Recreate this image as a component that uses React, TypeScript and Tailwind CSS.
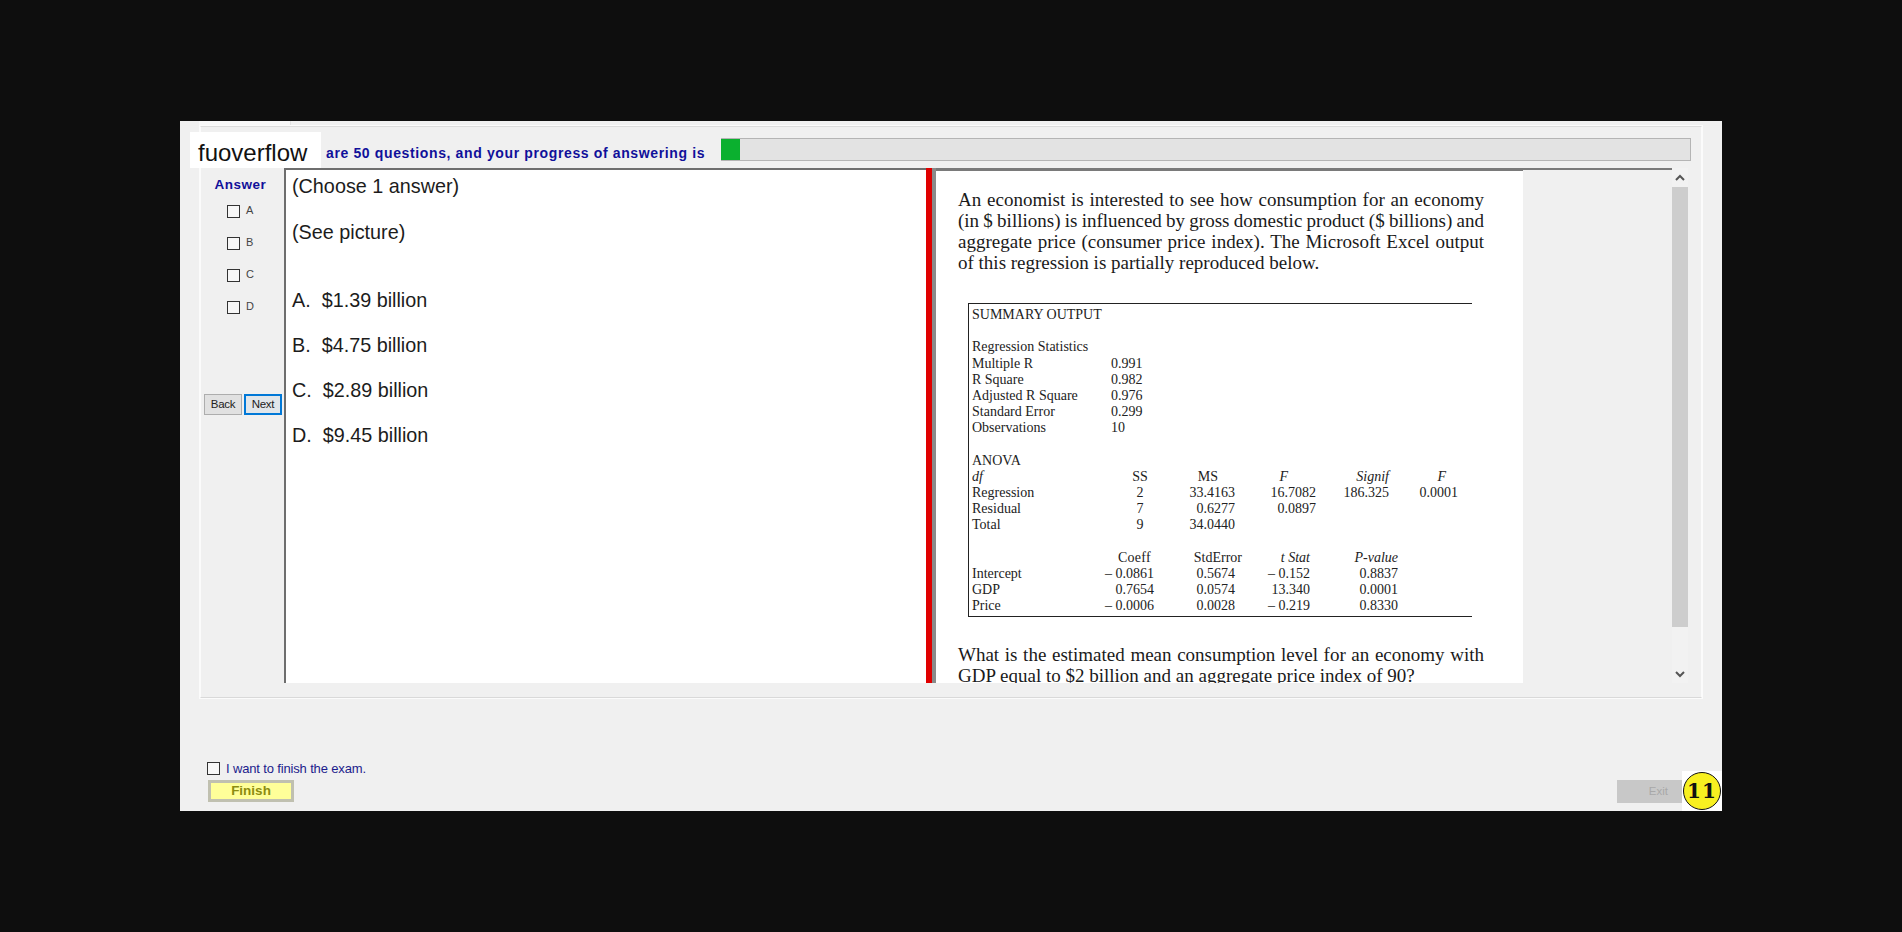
const options = ["A", "B", "C", "D"];

const answers = ["A.  $1.39 billion", "B.  $4.75 billion", "C.  $2.89 billion", "D.  $9.45 billion"];

const stats = [
  ["Multiple R", "0.991"],
  ["R Square", "0.982"],
  ["Adjusted R Square", "0.976"],
  ["Standard Error", "0.299"],
  ["Observations", "10"],
];

const anovaRows = [
  ["Regression", "2", "33.4163", "16.7082", "186.325", "0.0001"],
  ["Residual", "7", "0.6277", "0.0897", "", ""],
  ["Total", "9", "34.0440", "", "", ""],
];

const coeffRows = [
  ["Intercept", "– 0.0861", "0.5674", "– 0.152", "0.8837"],
  ["GDP", "0.7654", "0.0574", "13.340", "0.0001"],
  ["Price", "– 0.0006", "0.0028", "– 0.219", "0.8330"],
];

function AnovaRow({ cells, italic }: { cells: string[]; italic?: boolean }) {
  return (
    <div className="grid grid-cols-[153px_30px_80px_81px_73px_69px] h-[16.2px]">
      <span className={italic ? "italic" : ""}>{cells[0]}</span>
      <span className="text-center">{cells[1]}</span>
      <span className={italic ? "text-right pr-[17px]" : "text-right"}>{cells[2]}</span>
      <span className={italic ? "text-right italic pr-7" : "text-right"}>{cells[3]}</span>
      <span className={italic ? "text-right italic" : "text-right"}>{cells[4]}</span>
      <span className={italic ? "text-right italic pr-3" : "text-right"}>{cells[5]}</span>
    </div>
  );
}

function CoeffRow({ cells, head }: { cells: string[]; head?: boolean }) {
  return (
    <div className="grid grid-cols-[102px_80px_81px_75px_88px] h-[16.2px]">
      <span>{cells[0]}</span>
      <span className={head ? "text-right pr-[3px] tracking-[0.3px]" : "text-right"}>{cells[1]}</span>
      <span className={head ? "text-right -mr-[7px]" : "text-right"}>{cells[2]}</span>
      <span className={head ? "text-right italic" : "text-right"}>{cells[3]}</span>
      <span className={head ? "text-right italic" : "text-right"}>{cells[4]}</span>
    </div>
  );
}

function Excel() {
  return (
    <div className="ml-[10px] mt-[30px] w-[504px] h-[314px] border-l border-t border-b border-[#222] pl-[3px] pt-[3px] font-['Liberation_Serif',serif] text-[14px] leading-[16.2px] text-[#222]">
      <div className="h-[16.2px]">SUMMARY OUTPUT</div>
      <div className="h-[16.2px]" />
      <div className="h-[16.2px]">Regression Statistics</div>
      {stats.map((s) => (
        <div key={s[0]} className="grid grid-cols-[139px_60px] h-[16.2px]">
          <span>{s[0]}</span>
          <span>{s[1]}</span>
        </div>
      ))}
      <div className="h-[16.2px]" />
      <div className="h-[16.2px]">ANOVA</div>
      <AnovaRow italic cells={["df", "SS", "MS", "F", "Signif", "F"]} />
      {anovaRows.map((r) => (
        <AnovaRow key={r[0]} cells={r} />
      ))}
      <div className="h-[16.2px]" />
      <CoeffRow head cells={["", "Coeff", "StdError", "t Stat", "P-value"]} />
      {coeffRows.map((r) => (
        <CoeffRow key={r[0]} cells={r} />
      ))}
    </div>
  );
}

export default function App() {
  return (
    <div className="min-h-[932px] bg-[#0e0e0e] pt-[121px] pl-[180px] font-['Liberation_Sans',sans-serif]">
      <div className="relative w-[1542px] h-[690px] bg-[#f0f0f0] flex flex-col">
        {/* tab left over from the cropped window */}
        <div className="ml-[19px] w-[92px] h-[5px] bg-[#f8f8f8] border-r border-[#e2e2e2]" />

        <div className="mx-[20px] h-[572px] border border-t-[#dcdcdc] border-x-[#fbfbfb] border-b-[#d9d9d9] shadow-[0_0_0_1px_#fbfbfb] flex flex-col">
          <div className="h-[41px] flex items-start pl-[125px] pr-[10px] pt-[11px]">
            <span className="w-[395px] mt-[4px] whitespace-nowrap font-bold text-[14px] leading-[22px] text-[#10109a] tracking-[0.63px]">
              are 50 questions, and your progress of answering is
            </span>
            <div className="flex-1 h-[23px] bg-[#e3e3e3] border-y border-r border-[#b4b4b4]">
              <div className="w-[19px] h-full bg-[#0bb02f]" />
            </div>
          </div>

          <div className="h-[515px] flex">
            <div className="w-[83px] flex flex-col">
              <div className="pt-[9px] pr-[4px] text-center font-bold text-[13.5px] leading-[15px] text-[#10109a] tracking-[0.5px]">
                Answer
              </div>
              <div className="mt-[13px] pl-[26px] flex flex-col gap-[19px]">
                {options.map((o) => (
                  <div key={o} className="flex items-start gap-[6px] h-[13px]">
                    <div className="w-[13px] h-[13px] border border-[#333] bg-[#f7f7f7]" />
                    <span className="text-[11px] leading-[11px] text-[#444]">{o}</span>
                  </div>
                ))}
              </div>
              <div className="mt-[80px] pl-[3px] flex gap-[2px]">
                <button className="w-[38px] h-[21px] bg-[#e1e1e1] border border-[#adadad] text-[11.5px] text-[#222] tracking-[-0.3px]">Back</button>
                <button className="w-[38px] h-[21px] bg-[#e1e6ea] border-2 border-[#0078d7] text-[11.5px] text-[#222] tracking-[-0.3px]">Next</button>
              </div>
            </div>

            <div className="w-[642px] bg-white border-l-2 border-t-2 border-[#6e6e6e] pl-[6px] pt-[2px] text-[19.8px] leading-[28px] text-[#1c1c1c]">
              <p>(Choose 1 answer)</p>
              <p className="mt-[18px]">(See picture)</p>
              <div className="mt-[40px] flex flex-col gap-[17px]">
                {answers.map((a) => (
                  <p key={a} className="whitespace-pre">{a}</p>
                ))}
              </div>
            </div>

            <div className="w-[6px] bg-[#e00000]" />
            <div className="w-[4px] bg-[#8a8a8a]" />

            <div className="flex-1 flex min-h-0">
              <div className="w-[587px] bg-white border-t-[3px] border-[#7a7a7a] pl-[22px] overflow-hidden">
                <div className="mt-[18px] w-[526px] font-['Liberation_Serif',serif] text-[19px] leading-[21px] text-[#1a1a1a]">
                  <p className="whitespace-nowrap [text-align-last:justify]">An economist is interested to see how consumption for an economy</p>
                  <p className="whitespace-nowrap [text-align-last:justify] [word-spacing:-0.6px]">(in $ billions) is influenced by gross domestic product ($ billions) and</p>
                  <p className="whitespace-nowrap [text-align-last:justify]">aggregate price (consumer price index). The Microsoft Excel output</p>
                  <p>of this regression is partially reproduced below.</p>
                </div>
                <Excel />
                <div className="mt-[27px] w-[526px] font-['Liberation_Serif',serif] text-[19px] leading-[21px] text-[#1a1a1a]">
                  <p className="whitespace-nowrap [text-align-last:justify]">What is the estimated mean consumption level for an economy with</p>
                  <p>GDP equal to $2 billion and an aggregate price index of 90?</p>
                </div>
              </div>
              <div className="w-[149px] border-t-2 border-[#7a7a7a]" />
              <div className="w-[16px] bg-[#f2f2f2] flex flex-col items-center text-[#555]">
                <svg className="mt-[6px] shrink-0" width="10" height="8" viewBox="0 0 10 8" fill="none" stroke="currentColor" strokeWidth="2"><path d="M1 6l4-4 4 4" /></svg>
                <div className="mt-[5px] w-full flex-1 bg-[#cdcdcd]" />
                <div className="h-[56px] w-full flex items-end justify-center pb-[5px]">
                  <svg width="10" height="8" viewBox="0 0 10 8" fill="none" stroke="currentColor" strokeWidth="2"><path d="M1 2l4 4 4-4" /></svg>
                </div>
              </div>
            </div>
          </div>
        </div>

        <div className="pl-[27px] mt-[63px] flex flex-col">
          <div className="flex items-center gap-[6px] h-[14px]">
            <div className="w-[13px] h-[13px] border border-[#333] bg-[#f7f7f7]" />
            <span className="mt-[2px] text-[13px] leading-[14px] tracking-[-0.15px] text-[#1c1c8c]">I want to finish the exam.</span>
          </div>
          <div className="flex justify-between mt-[5px]">
            <button className="ml-px w-[86px] h-[22px] bg-[#ffff99] border-[3px] border-[#c0c0b0] font-bold text-[13.5px] leading-[16px] text-[#8c8c10]">Finish</button>
            <button className="mr-[40px] w-[65px] h-[23px] bg-[#c8c8c8] text-[11.5px] text-[#a8a8a8] text-right pr-[14px]">Exit</button>
          </div>
        </div>

        {/* countdown badge */}
        <div className="absolute right-0 bottom-0 w-[40px] h-[40px] bg-white flex items-center justify-center">
          <div className="w-[38px] h-[38px] rounded-full bg-[#f8f020] border border-[#111] flex items-center justify-center font-['DejaVu_Serif',serif] font-bold text-[20px] tracking-[1px] text-[#111]">
            11
          </div>
        </div>

        {/* site watermark */}
        <div className="absolute left-[10px] top-[11px] w-[131px] h-[36px] bg-white pl-[8px] pt-[3px] text-[24px] leading-[36px] text-[#111] overflow-hidden">
          fuoverflow
        </div>
      </div>
    </div>
  );
}
